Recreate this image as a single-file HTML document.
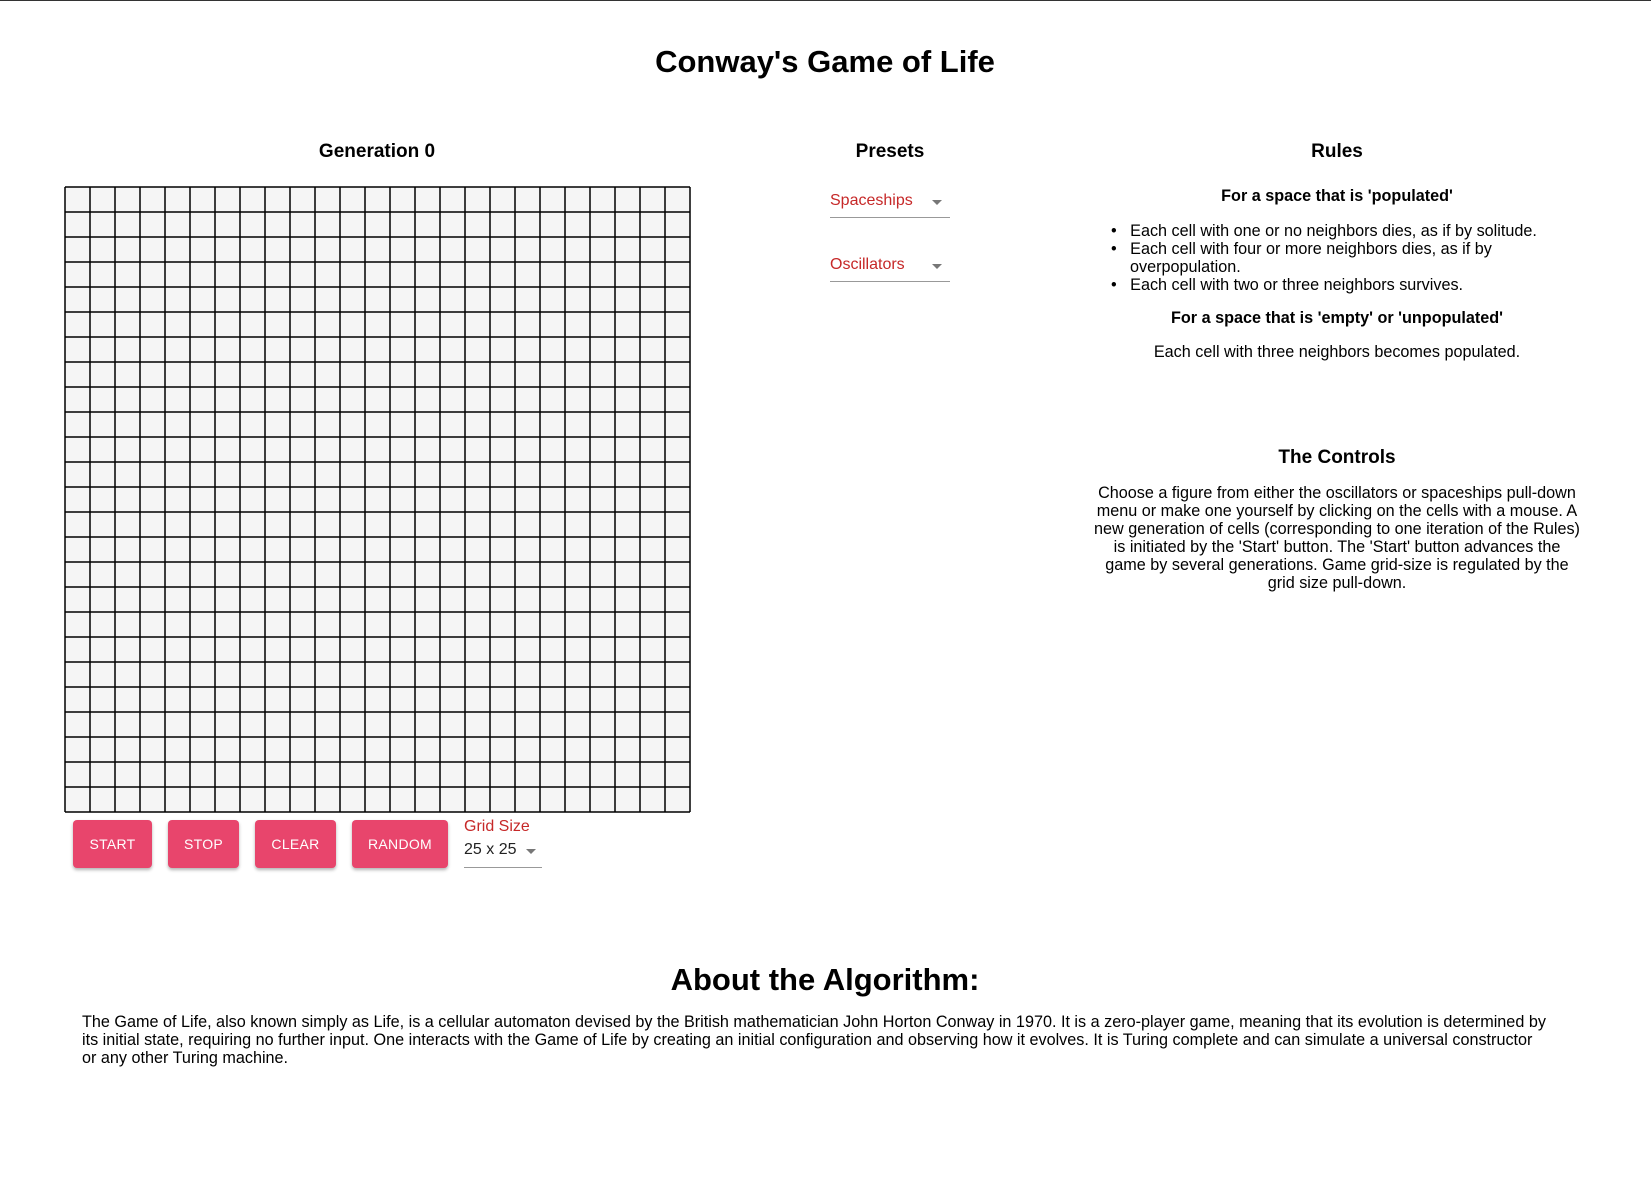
<!DOCTYPE html>
<html><head><meta charset="utf-8"><style>
*{margin:0;padding:0;box-sizing:border-box}
body{width:1651px;height:1200px;background:#fff;font-family:"Liberation Sans",Arial,sans-serif;color:#000;position:relative;overflow:hidden;border-top:1px solid #333}
.a{position:absolute;white-space:nowrap}
.c{transform:translateX(-50%);text-align:center}
h1{font-size:31px;font-weight:bold}
.h{font-size:19px;font-weight:bold}
.t{font-size:16.2px;line-height:18px}
.btn{position:absolute;top:819px;height:48px;background:#e8456c;color:#fff;font-size:14px;border-radius:4px;display:flex;align-items:center;justify-content:center;box-shadow:0 2px 3px rgba(0,0,0,.3);letter-spacing:.3px}
.sel{position:absolute;width:120px;border-bottom:1px solid #999;color:#c62828;font-size:16px;padding-bottom:6px}
.arr{position:absolute;right:8px;top:8px;width:0;height:0;border-left:5px solid transparent;border-right:5px solid transparent;border-top:5px solid #777}
</style></head><body>
<h1 class="a c" style="left:825px;top:43px">Conway's Game of Life</h1>
<div class="a c h" style="left:377px;top:140px">Generation 0</div>
<div class="a c h" style="left:890px;top:140px">Presets</div>
<div class="a c h" style="left:1337px;top:140px">Rules</div>

<svg class="a" style="left:64px;top:185px" width="628" height="628" viewBox="0 0 628 628">
<rect x="1" y="1" width="625" height="625" fill="#f5f5f5"/>
<g stroke="#000" stroke-width="1.5">
<path d="M1 1V626M26 1V626M51 1V626M76 1V626M101 1V626M126 1V626M151 1V626M176 1V626M201 1V626M226 1V626M251 1V626M276 1V626M301 1V626M326 1V626M351 1V626M376 1V626M401 1V626M426 1V626M451 1V626M476 1V626M501 1V626M526 1V626M551 1V626M576 1V626M601 1V626M626 1V626"/>
<path d="M1 1H626M1 26H626M1 51H626M1 76H626M1 101H626M1 126H626M1 151H626M1 176H626M1 201H626M1 226H626M1 251H626M1 276H626M1 301H626M1 326H626M1 351H626M1 376H626M1 401H626M1 426H626M1 451H626M1 476H626M1 501H626M1 526H626M1 551H626M1 576H626M1 601H626M1 626H626"/>
</g></svg>

<div class="btn" style="left:73px;width:79px">START</div>
<div class="btn" style="left:168px;width:71px">STOP</div>
<div class="btn" style="left:255px;width:81px">CLEAR</div>
<div class="btn" style="left:352px;width:96px">RANDOM</div>
<div class="a" style="left:464px;top:817px;color:#c62828;font-size:16px">Grid Size</div>
<div class="sel" style="left:464px;top:840px;width:78px;color:#222;height:27px">25 x 25<div class="arr" style="right:6px"></div></div>

<div class="sel" style="left:830px;top:191px;height:26px">Spaceships<div class="arr"></div></div>
<div class="sel" style="left:830px;top:255px;height:26px">Oscillators<div class="arr"></div></div>

<div class="a c t" style="left:1337px;top:186px;font-weight:bold">For a space that is 'populated'</div>
<div class="a t" style="left:1111px;top:221px">
<div>•&nbsp;&nbsp;&nbsp;Each cell with one or no neighbors dies, as if by solitude.</div>
<div>•&nbsp;&nbsp;&nbsp;Each cell with four or more neighbors dies, as if by</div>
<div style="padding-left:19px">overpopulation.</div>
<div>•&nbsp;&nbsp;&nbsp;Each cell with two or three neighbors survives.</div>
</div>
<div class="a c t" style="left:1337px;top:308px;font-weight:bold">For a space that is 'empty' or 'unpopulated'</div>
<div class="a c t" style="left:1337px;top:342px">Each cell with three neighbors becomes populated.</div>

<div class="a c h" style="left:1337px;top:446px">The Controls</div>
<div class="a c t" style="left:1337px;top:483px">Choose a figure from either the oscillators or spaceships pull-down<br>menu or make one yourself by clicking on the cells with a mouse. A<br>new generation of cells (corresponding to one iteration of the Rules)<br>is initiated by the 'Start' button. The 'Start' button advances the<br>game by several generations. Game grid-size is regulated by the<br>grid size pull-down.</div>

<h1 class="a c" style="left:825px;top:961px">About the Algorithm:</h1>
<div class="a t" style="left:82px;top:1012px">The Game of Life, also known simply as Life, is a cellular automaton devised by the British mathematician John Horton Conway in 1970. It is a zero-player game, meaning that its evolution is determined by<br>its initial state, requiring no further input. One interacts with the Game of Life by creating an initial configuration and observing how it evolves. It is Turing complete and can simulate a universal constructor<br>or any other Turing machine.</div>
</body></html>
